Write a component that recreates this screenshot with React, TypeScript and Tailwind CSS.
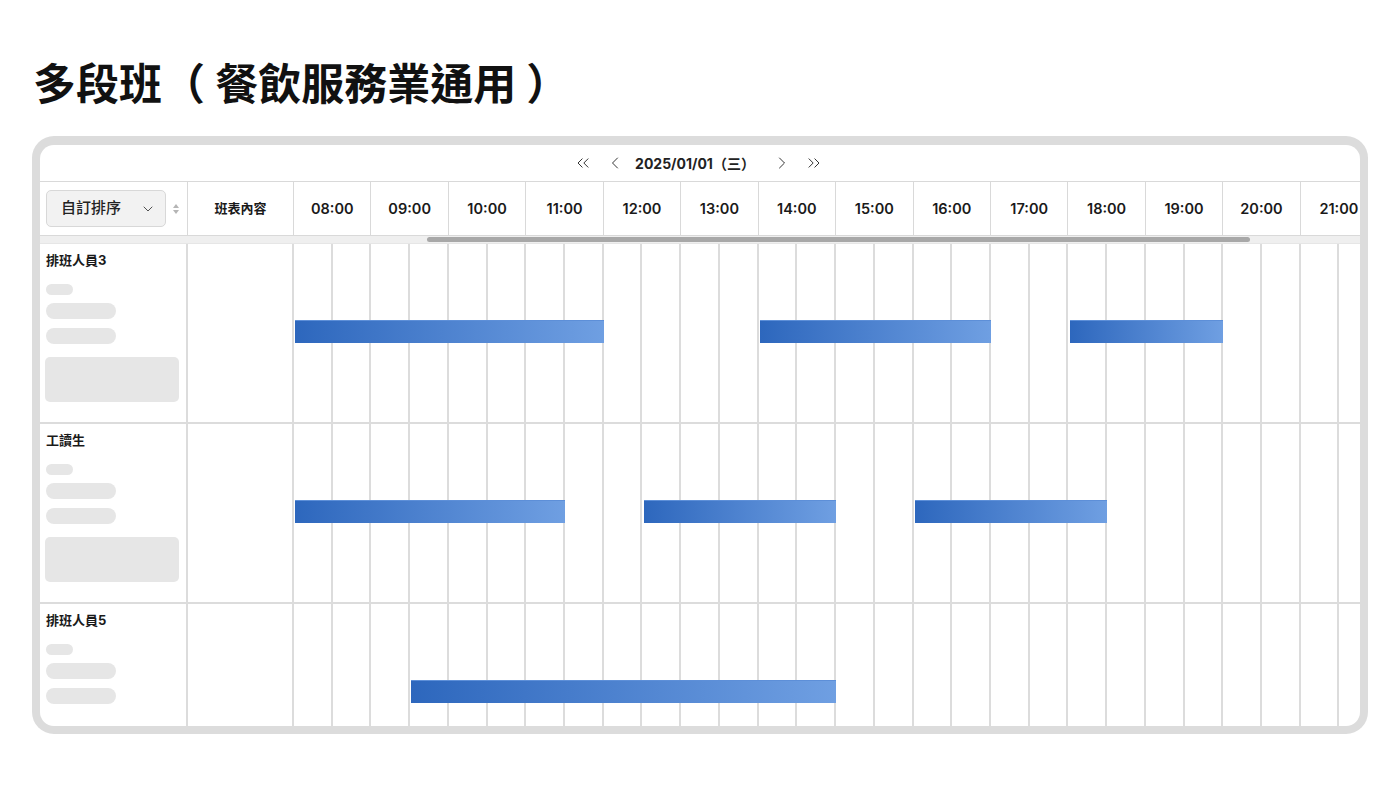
import React from "react";
import { ChevronLeft, ChevronRight, ChevronsLeft, ChevronsRight, ChevronDown } from "lucide-react";

const HOURS = ["08:00","09:00","10:00","11:00","12:00","13:00","14:00","15:00","16:00","17:00","18:00","19:00","20:00","21:00"];
const HW = 77.45;
const LEFT = 254;

type Row = { name: string; bars: [number, number][]; box: boolean };
const ROWS: Row[] = [
  { name: "排班人員3", bars: [[8, 12], [14, 17], [18, 20]], box: true },
  { name: "工讀生", bars: [[8, 11.5], [12.5, 15], [16, 18.5]], box: true },
  { name: "排班人員5", bars: [[9.5, 15]], box: false },
];

const font = { fontFamily: "Inter, 'Noto Sans CJK TC', sans-serif" };

function BodyRow({ row, last }: { row: Row; last: boolean }) {
  const halves = Array.from({ length: 28 });
  return (
    <div className={`relative flex h-[180px] shrink-0 ${last ? "" : "border-b-2 border-[#dcdcdc]"}`}>
      <div className="w-[148px] shrink-0 border-r-2 border-[#dcdcdc] pl-[6px] pt-[9px] flex flex-col">
        <div className="text-[13px] leading-[14px] font-bold text-[#1a1a1a]">{row.name}</div>
        <div className="mt-[17px] h-[11px] w-[27px] rounded-full bg-[#e6e6e6]" />
        <div className="mt-[8px] h-[16px] w-[70px] rounded-full bg-[#e6e6e6]" />
        <div className="mt-[9px] h-[16px] w-[70px] rounded-full bg-[#e6e6e6]" />
        {row.box && <div className="mt-[13px] -ml-[1px] h-[45px] w-[134px] rounded-[5px] bg-[#e6e6e6]" />}
      </div>
      <div className="w-[106px] shrink-0 border-r-2 border-[#dcdcdc]" />
      <div className="flex">
        {halves.map((_, i) => (
          <div key={i} className="w-[38.725px] shrink-0 border-r-2 border-[#dcdcdc]" />
        ))}
      </div>
      {row.bars.map(([s, e], i) => (
        <div
          key={i}
          className="absolute top-[76px] h-[23px] bg-gradient-to-r from-[#2d67bd] to-[#6f9fe2] border-t border-[#5d8fd8]"
          style={{ left: LEFT + 1 + (s - 8) * HW, width: (e - s) * HW - 1 }}
        />
      ))}
    </div>
  );
}

export default function App() {
  return (
    <div className="w-[1400px] h-[788px] bg-white overflow-hidden" style={font}>
      <div className="pl-[33px] pt-[63px] h-[136px]">
        <h1 className="text-[43px] leading-none font-bold text-[#111]">多段班（ 餐飲服務業通用 ）</h1>
      </div>
      <div className="ml-[32px] w-[1336px] h-[598px] rounded-[22px] bg-[#dcdcdc] pt-[9px] px-[8px] pb-[8px]">
        <div className="w-full h-full bg-white rounded-[14px] overflow-hidden flex flex-col">
          {/* date nav */}
          <div className="h-[36px] shrink-0 flex items-center justify-center text-[#222] pr-[3px]">
            <ChevronsLeft size={20} strokeWidth={1.1} />
            <ChevronLeft size={20} strokeWidth={1.1} className="ml-[12px]" />
            <span className="ml-[10px] text-[14px] font-bold">2025/01/01（三）</span>
            <ChevronRight size={20} strokeWidth={1.1} className="ml-[17px]" />
            <ChevronsRight size={20} strokeWidth={1.1} className="ml-[12px]" />
          </div>
          {/* header */}
          <div className="h-[55px] shrink-0 flex border-t border-b border-[#d9d9d9] text-[#1a1a1a]">
            <div className="w-[148px] shrink-0 border-r border-[#d9d9d9] flex items-center pl-[6px]">
              <div className="w-[120px] h-[37px] rounded-[5px] border border-[#d8d8d8] bg-[#f2f2f2] flex items-center justify-between pl-[14px] pr-[9px]">
                <span className="text-[15px] font-medium text-[#222]">自訂排序</span>
                <ChevronDown size={16} strokeWidth={1.4} className="text-[#444]" />
              </div>
              <svg width="8" height="12" viewBox="0 0 8 12" className="ml-[6px]">
                <path d="M4 1 L7 5 L1 5 Z" fill="#b5b5b5" />
                <path d="M4 11 L7 7 L1 7 Z" fill="#b5b5b5" />
              </svg>
            </div>
            <div className="w-[106px] shrink-0 border-r border-[#d9d9d9] flex items-center justify-center text-[13px] font-bold">班表內容</div>
            {HOURS.map((h) => (
              <div key={h} className="w-[77.45px] shrink-0 border-r border-[#d9d9d9] flex items-center justify-center text-[14.5px] font-semibold">
                {h}
              </div>
            ))}
          </div>
          {/* scrollbar */}
          <div className="h-[8px] shrink-0 bg-[#efefef] relative border-b border-[#e6e6e6]">
            <div className="absolute left-[387px] top-[1px] w-[823px] h-[5px] rounded-full bg-[#a8a8a8]" />
          </div>
          {/* body */}
          <div className="flex flex-col">
            {ROWS.map((r, i) => (
              <BodyRow key={r.name} row={r} last={i === ROWS.length - 1} />
            ))}
          </div>
        </div>
      </div>
    </div>
  );
}
